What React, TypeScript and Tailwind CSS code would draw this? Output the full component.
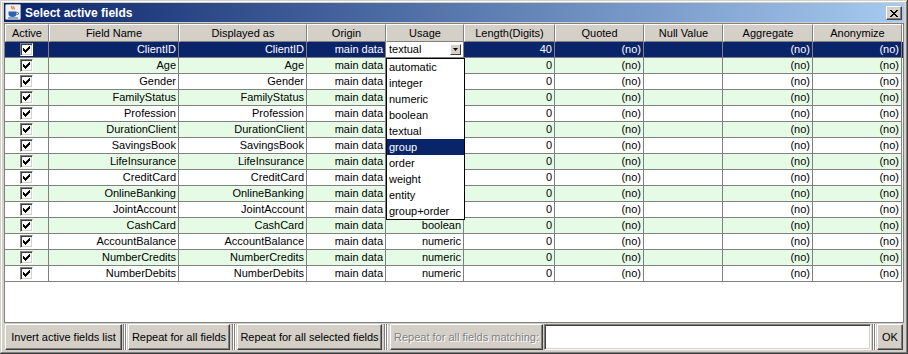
import React from "react";

const FONT = "font-['Liberation_Sans',Arial,sans-serif]";

const columns = [
  "Active",
  "Field Name",
  "Displayed as",
  "Origin",
  "Usage",
  "Length(Digits)",
  "Quoted",
  "Null Value",
  "Aggregate",
  "Anonymize",
];

const fields = [
  "ClientID",
  "Age",
  "Gender",
  "FamilyStatus",
  "Profession",
  "DurationClient",
  "SavingsBook",
  "LifeInsurance",
  "CreditCard",
  "OnlineBanking",
  "JointAccount",
  "CashCard",
  "AccountBalance",
  "NumberCredits",
  "NumberDebits",
];

const usage: Record<string, string> = {
  CashCard: "boolean",
  AccountBalance: "numeric",
  NumberCredits: "numeric",
  NumberDebits: "numeric",
};

const options = [
  "automatic",
  "integer",
  "numeric",
  "boolean",
  "textual",
  "group",
  "order",
  "weight",
  "entity",
  "group+order",
];

const GRID =
  "grid grid-cols-[44px_130px_128px_79px_78px_91px_89px_79px_90px_89px]";

function JavaIcon() {
  return (
    <svg width="16" height="16" viewBox="0 0 16 16">
      <rect x="0.5" y="0.5" width="15" height="15" rx="1" fill="#eef0f4" stroke="#9aa4b8" />
      <path d="M7 2c-1 1 1 2 0 3.5M9 2.5c-1 1 1 2 0 3" stroke="#e07020" strokeWidth="1.2" fill="none" />
      <path d="M3.5 7.5h8v2.5c0 2-1.5 3-4 3s-4-1-4-3z" fill="#3060b0" />
      <path d="M11.5 8.5h1a1 1 0 0 1 0 2h-1" stroke="#3060b0" fill="none" />
      <rect x="3" y="13.5" width="10" height="1" fill="#3060b0" />
    </svg>
  );
}

function CloseButton() {
  return (
    <div className="w-[16px] h-[14px] mt-[3px] mr-[2px] bg-[#D4D0C8] border border-t-white border-l-white border-r-[#404040] border-b-[#404040] shadow-[inset_-1px_-1px_0_#808080] flex items-center justify-center">
      <svg width="8" height="7" viewBox="0 0 8 7" shapeRendering="crispEdges">
        <path d="M0 0h2l2 2.2L6 0h2L5 3.5 8 7H6L4 4.8 2 7H0l3-3.5z" fill="#000" />
      </svg>
    </div>
  );
}

function Checkbox() {
  const cols = [2, 3, 4, 3, 2, 1, 0];
  return (
    <div className="w-[13px] h-[13px] bg-white border border-t-[#808080] border-l-[#808080] border-r-white border-b-white shadow-[inset_1px_1px_0_#404040,inset_-1px_-1px_0_#d4d0c8] flex items-center justify-center">
      <svg width="7" height="7" viewBox="0 0 7 7" shapeRendering="crispEdges">
        {cols.map((y, x) => (
          <rect key={x} x={x} y={y} width="1" height="3" fill="#000" />
        ))}
      </svg>
    </div>
  );
}

function Separator() {
  return (
    <div className="flex-1 flex justify-center">
      <div className="w-[2px] border-l border-l-[#808080] border-r border-r-white" />
      <div className="w-[2px] border-l border-l-[#808080] border-r border-r-white" />
    </div>
  );
}

const btn =
  "h-full shrink-0 bg-[#D4D0C8] border border-t-white border-l-white border-r-[#404040] border-b-[#404040] shadow-[inset_-1px_-1px_0_#808080] flex items-center justify-center text-[11px] whitespace-nowrap";

const cell =
  "h-[16px] border-r border-b border-[#808080] flex items-center justify-end pr-[2px] whitespace-nowrap overflow-hidden";

export default function App() {
  return (
    <div
      className={`w-[908px] h-[354px] bg-[#D4D0C8] pt-[3px] px-[4px] pb-[4px] flex flex-col text-[11px] text-black ${FONT} shadow-[inset_-1px_-1px_0_#404040,inset_1px_1px_0_#d4d0c8,inset_-2px_-2px_0_#808080,inset_2px_2px_0_#ffffff]`}
    >
      {/* title bar */}
      <div className="h-[19px] shrink-0 flex items-start bg-[linear-gradient(to_right,#0A246A,#A6CAF0)]">
        <div className="ml-[1px] mt-[1px]">
          <JavaIcon />
        </div>
        <div className="ml-[4px] h-[19px] flex items-center text-white font-bold text-[12px]">
          Select active fields
        </div>
        <div className="flex-1" />
        <CloseButton />
      </div>

      {/* table viewport */}
      <div className="mt-[1px] h-[300px] shrink-0 border border-[#808080] bg-white relative overflow-hidden">
        <div className={GRID}>
          {columns.map((c) => (
            <div
              key={c}
              className="h-[18px] bg-[#D4D0C8] border border-t-white border-l-white border-r-[#808080] border-b-[#808080] flex items-center justify-center whitespace-nowrap"
            >
              {c}
            </div>
          ))}
        </div>

        {fields.map((f, i) => {
          const sel = i === 0;
          const bg = sel ? "bg-[#0A246A] text-white" : i % 2 === 1 ? "bg-[#E6FBE6]" : "bg-white";
          return (
            <div key={f} className={`${GRID} ${bg}`}>
              <div className="h-[16px] border-r border-b border-[#808080] flex items-center justify-center">
                <Checkbox />
              </div>
              <div className={cell}>{f}</div>
              <div className={cell}>{f}</div>
              <div className={cell}>main data</div>
              {sel ? (
                <div className="h-[16px] border-r border-b border-[#808080] bg-white text-black flex items-center justify-between pl-[3px] pr-[2px]">
                  <span>textual</span>
                  <div className="w-[11px] h-[11px] bg-[#D4D0C8] border border-t-white border-l-white border-r-[#404040] border-b-[#404040] flex items-center justify-center">
                    <svg width="5" height="3" viewBox="0 0 5 3">
                      <path d="M0 0h5L2.5 3z" fill="#000" />
                    </svg>
                  </div>
                </div>
              ) : (
                <div className={cell}>{usage[f] ?? ""}</div>
              )}
              <div className={cell}>{sel ? "40" : "0"}</div>
              <div className={cell}>(no)</div>
              <div className={cell}></div>
              <div className={cell}>(no)</div>
              <div className={cell}>(no)</div>
            </div>
          );
        })}

        {/* open combo list */}
        <div className="absolute left-[381px] top-[34px] w-[79px] h-[162px] border border-black bg-white flex flex-col">
          {options.map((o) => (
            <div
              key={o}
              className={`h-[16px] shrink-0 flex items-center pl-[2px] ${o === "group" ? "bg-[#0A246A] text-white" : ""}`}
            >
              {o}
            </div>
          ))}
        </div>
      </div>

      {/* bottom buttons */}
      <div className="mt-[1px] h-[26px] shrink-0 flex ml-[1px]">
        <div className={`${btn} w-[117px]`}>Invert active fields list</div>
        <div className="w-[6px] flex"><Separator /></div>
        <div className={`${btn} w-[102px]`}>Repeat for all fields</div>
        <div className="w-[7px] flex"><Separator /></div>
        <div className={`${btn} w-[145px]`}>Repeat for all selected fields</div>
        <div className="w-[8px] flex"><Separator /></div>
        <div className={`${btn} w-[153px] text-[#808080] [text-shadow:1px_1px_0_#ffffff]`}>
          Repeat for all fields matching:
        </div>
        <div className="w-[1px]" />
        <div className="w-[327px] h-full bg-white border border-t-[#808080] border-l-[#808080] border-r-white border-b-white shadow-[inset_1px_1px_0_#404040,inset_-1px_-1px_0_#d4d0c8]" />
        <div className="w-[6px] flex"><Separator /></div>
        <div className={`${btn} w-[26px]`}>OK</div>
      </div>
    </div>
  );
}
